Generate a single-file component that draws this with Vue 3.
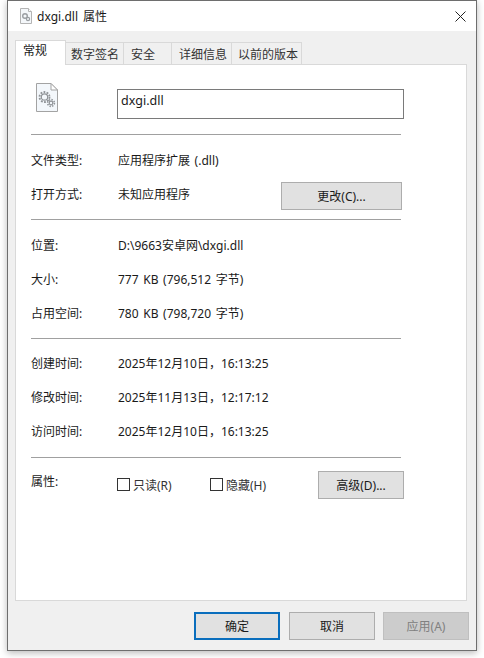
<script setup>
const tabs = [
  { label: '常规', width: 51, pad: 7, active: true },
  { label: '数字签名', width: 58, pad: 5 },
  { label: '安全', width: 48, pad: 7 },
  { label: '详细信息', width: 60, pad: 7 },
  { label: '以前的版本', width: 70, pad: 6 },
]
const locationRows = [
  ['位置:', 'D:\\9663安卓网\\dxgi.dll'],
  ['大小:', '777 KB (796,512 字节)'],
  ['占用空间:', '780 KB (798,720 字节)'],
]
const timeRows = [
  ['创建时间:', '2025年12月10日，16:13:25'],
  ['修改时间:', '2025年11月13日，12:17:12'],
  ['访问时间:', '2025年12月10日，16:13:25'],
]
</script>

<template>
  <div class="screen">
    <div class="window">
      <header class="titlebar">
        <svg class="title-icon" width="16" height="16" viewBox="0 0 16 16">
          <path d="M2.500 .5H10.500L13.500 3.500V15.500H2.500Z" fill="#f4f7fa" stroke="#b4b4b4" />
          <path d="M10.500 .5V3.500H13.500" fill="#fff" stroke="#b4b4b4" />
          <circle cx="7" cy="8" r="2.300" fill="none" stroke="#9a9ea2" stroke-width="1.400" />
          <circle cx="10" cy="11" r="1.600" fill="none" stroke="#9a9ea2" stroke-width="1.200" />
        </svg>
        <span class="title-text">dxgi.dll 属性</span>
        <svg class="close" width="11" height="11" viewBox="0 0 11 11">
          <path d="M.5 .5L10.500 10.500M10.500 .5L.5 10.500" stroke="#222" stroke-width="1" fill="none" />
        </svg>
      </header>

      <div class="body">
        <nav class="tabs">
          <div
            v-for="tab in tabs"
            :key="tab.label"
            class="tab"
            :class="{ active: tab.active }"
            :style="{ width: tab.width + 'px', paddingLeft: tab.pad + 'px' }"
          >{{ tab.label }}</div>
        </nav>

        <main class="panel">
          <div class="name-row">
            <svg class="file-icon" width="22" height="29" viewBox="0 0 22 29">
              <path d="M.5 .5H15L21.500 7V28.500H.5Z" fill="#f3f7fb" stroke="#a3a3a3" />
              <path d="M15 .5V7H21.500Z" fill="#fff" stroke="#a3a3a3" />
              <g fill="none" stroke="#8f9397">
                <circle cx="8.500" cy="14" r="3.200" stroke-width="1.200" />
                <circle cx="8.500" cy="14" r="5" stroke-width="1.800" stroke-dasharray="1.800 1.340" />
                <circle cx="15" cy="20" r="1.800" stroke-width="1.200" />
                <circle cx="15" cy="20" r="3.400" stroke-width="1.600" stroke-dasharray="1.400 1.270" />
              </g>
            </svg>
            <div class="name-box">dxgi.dll</div>
          </div>
          <hr class="rule" />

          <div class="row">
            <span class="label">文件类型:</span>
            <span class="value">应用程序扩展 (.dll)</span>
          </div>
          <div class="row">
            <span class="label">打开方式:</span>
            <span class="value">未知应用程序</span>
            <button class="btn change">更改(C)...</button>
          </div>
          <hr class="rule spaced" />

          <div v-for="r in locationRows" :key="r[0]" class="row">
            <span class="label">{{ r[0] }}</span>
            <span class="value">{{ r[1] }}</span>
          </div>
          <hr class="rule spaced before-times" />

          <div v-for="r in timeRows" :key="r[0]" class="row">
            <span class="label">{{ r[0] }}</span>
            <span class="value">{{ r[1] }}</span>
          </div>
          <hr class="rule after-times" />

          <div class="row">
            <span class="label attr-label">属性:</span>
            <label class="check readonly"><i class="box"></i>只读(R)</label>
            <label class="check hidden-attr"><i class="box"></i>隐藏(H)</label>
            <button class="btn advanced">高级(D)...</button>
          </div>
        </main>

        <footer class="actions">
          <button class="btn action primary">确定</button>
          <button class="btn action">取消</button>
          <button class="btn action disabled">应用(A)</button>
        </footer>
      </div>
    </div>
  </div>
</template>

<style scoped>
.screen {
  width: 484px;
  height: 658px;
  background: #fff;
  padding-left: 7px;
  box-sizing: border-box;
  overflow: hidden;
  font-family: "Noto Sans", "Noto Sans CJK SC", sans-serif;
  font-size: 12px;
  color: #1a1a1a;
}
.window {
  width: 470px;
  height: 651px;
  box-sizing: border-box;
  border: 1px solid #6e6e6e;
  background: #f0f0f0;
  box-shadow: 0 2px 7px rgba(0, 0, 0, 0.28);
  display: flex;
  flex-direction: column;
}
.titlebar {
  height: 30px;
  background: #fff;
  display: flex;
  align-items: center;
  padding: 0 10px;
  flex: none;
}
.title-icon { flex: none; }
.title-text {
  margin-left: 3px;
  padding-bottom: 1px;
  word-spacing: 2px;
  flex: 1;
}
.close { flex: none; }
.body {
  flex: 1;
  padding: 9px 9px 0 7px;
  display: flex;
  flex-direction: column;
}
.tabs {
  height: 24px;
  display: flex;
  align-items: flex-end;
  position: relative;
  z-index: 1;
}
.tab {
  height: 22px;
  box-sizing: border-box;
  border: 1px solid #d9d9d9;
  border-bottom: none;
  border-left: none;
  background: #f0f0f0;
  line-height: 23px;
  color: #333;
}
.tab.active {
  height: 25px;
  margin-bottom: -1px;
  background: #fff;
  border-left: 1px solid #d9d9d9;
  line-height: 20px;
  color: #1a1a1a;
}
.panel {
  width: 452px;
  height: 537px;
  box-sizing: border-box;
  background: #fff;
  border: 1px solid #d9d9d9;
  padding-left: 15px;
  flex: none;
}
.name-row {
  height: 69px;
  display: flex;
  align-items: flex-start;
}
.file-icon {
  flex: none;
  margin: 18px 0 0 5px;
}
.name-box {
  width: 287px;
  height: 30px;
  box-sizing: border-box;
  margin: 24px 0 0 59px;
  border: 1px solid #7a7a7a;
  padding-left: 3px;
  line-height: 22px;
  font-size: 12.500px;
}
.rule {
  width: 370px;
  margin: 0 0 8px;
  border: none;
  border-top: 1px solid #a0a0a0;
  height: 0;
}
.rule.spaced { margin-top: 8px; }
.rule.before-times { margin-bottom: 7px; }
.rule.after-times { margin-top: 9px; margin-bottom: 7px; }
.row {
  height: 34px;
  display: flex;
  align-items: center;
  width: 373px;
}
.label {
  width: 87px;
  flex: none;
}
.attr-label { padding-bottom: 2px; }
.value {
  flex: 1;
  word-spacing: 1.500px;
}
.btn {
  font: inherit;
  box-sizing: border-box;
  background: #e1e1e1;
  border: 1px solid #adadad;
  color: #1a1a1a;
  padding: 0;
  border-radius: 0;
}
.change {
  width: 121px;
  height: 28px;
  margin: 5px 2px 0 0;
  align-self: flex-start;
}
.check {
  display: flex;
  align-items: center;
  margin-top: 5px;
  margin-left: -1px;
  color: #333;
}
.readonly { width: 94px; }
.hidden-attr { width: 109px; }
.box {
  width: 13px;
  height: 13px;
  box-sizing: border-box;
  border: 1px solid #333;
  margin-right: 3px;
  flex: none;
}
.advanced {
  width: 86px;
  height: 28px;
  margin-top: 5px;
  margin-left: -1px;
}
.actions {
  margin-top: 11px;
  display: flex;
  justify-content: flex-end;
  gap: 8px;
  margin-right: -2px;
}
.action {
  width: 86px;
  height: 28px;
}
.primary {
  border: 2px solid #0a6ebd;
  margin-right: 1px;
}
.disabled {
  background: #cccccc;
  border-color: #bfbfbf;
  color: #808080;
}
</style>
